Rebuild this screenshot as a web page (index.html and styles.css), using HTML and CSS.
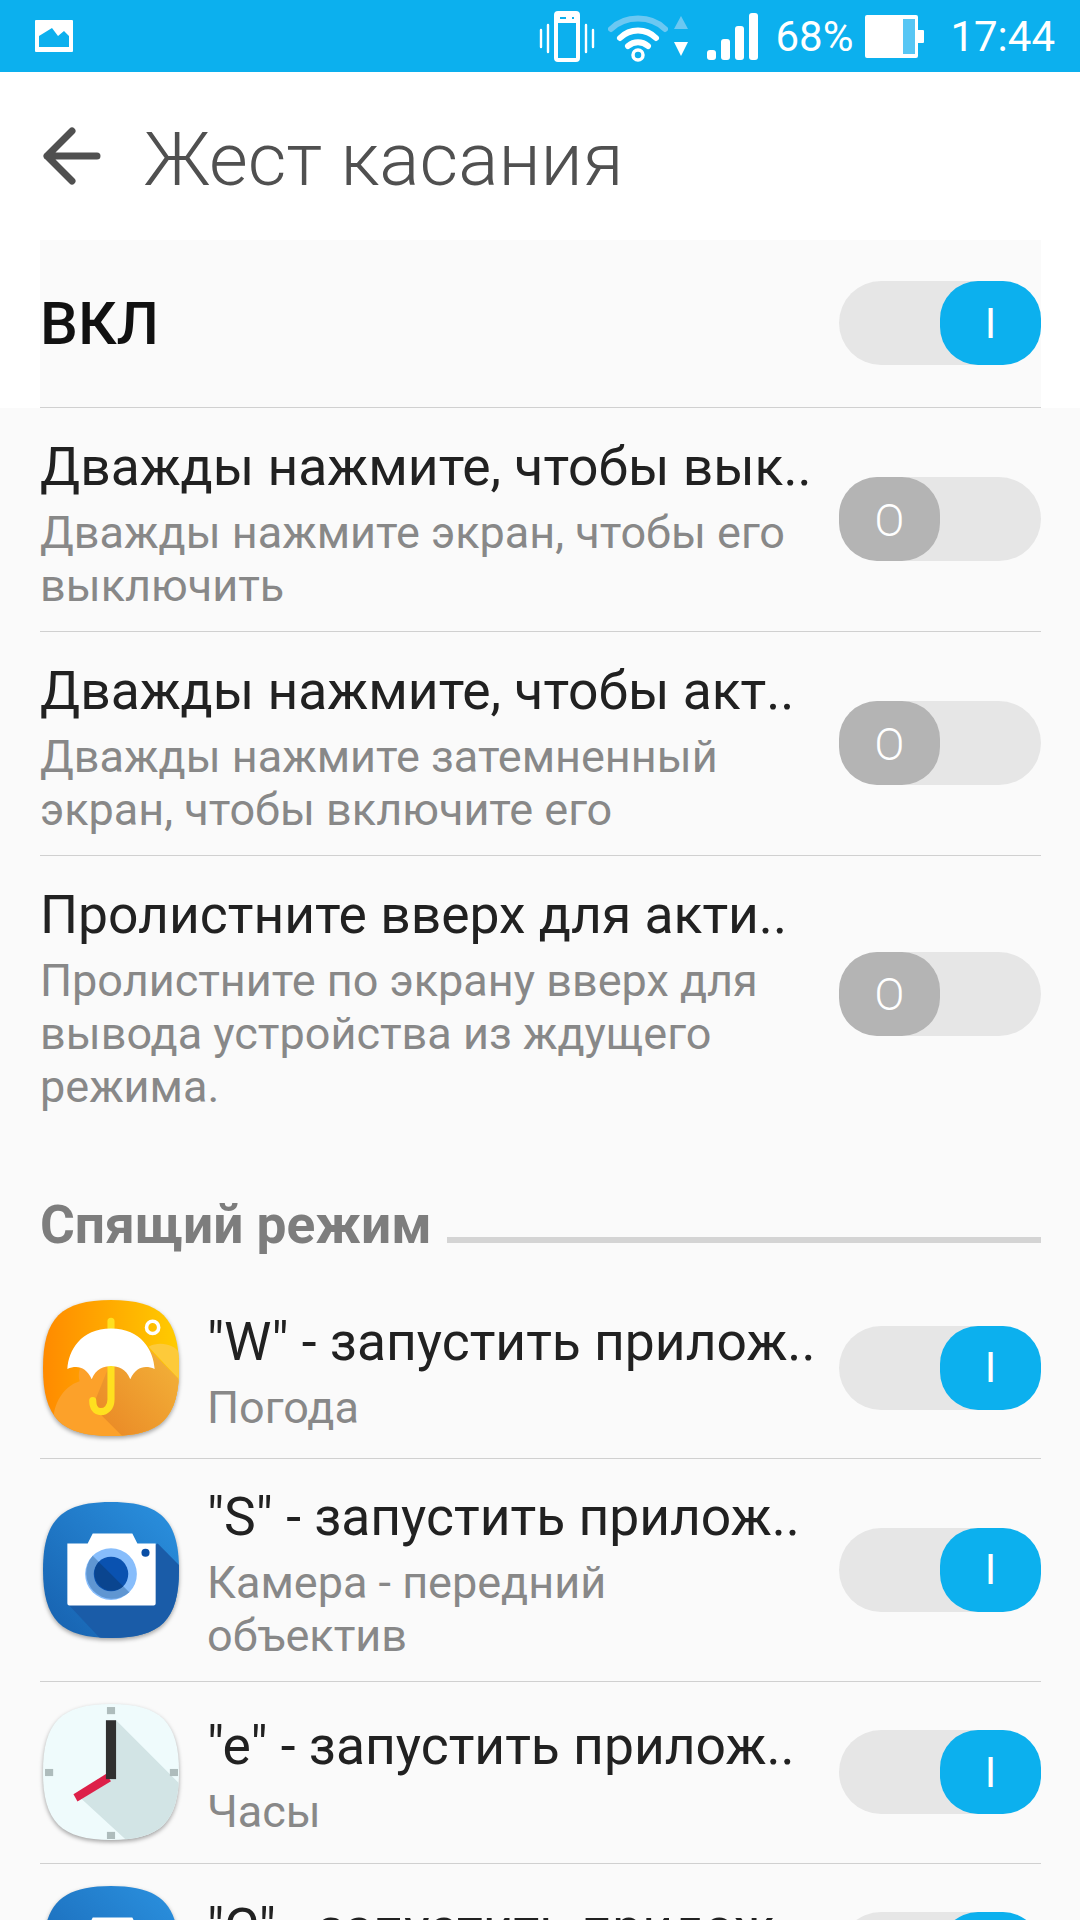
FILE: index.html
```html
<!DOCTYPE html>
<html lang="ru">
<head>
	<meta charset="UTF-8">
	<title>Жест касания</title>
	<link rel="stylesheet" href="styles.css">
</head>
<body>
	<div class="status_bar">
		<svg class="pic_icon" width="38" height="32" viewBox="0 0 38 32">
			<path fill="#fff" fill-rule="evenodd" d="M1 0H37a1 1 0 0 1 1 1V31a1 1 0 0 1-1 1H1a1 1 0 0 1-1-1V1a1 1 0 0 1 1-1ZM4 27H34V16L29 11 23 16 17 8 4 16Z"/>
		</svg>
		<div class="status_right">
			<svg width="56" height="51" viewBox="0 0 56 51">
				<g fill="none" stroke="#fff" stroke-linecap="round" stroke-width="2.4">
					<path d="M2 19V36M9 14V41M47 14V41M54 19V36"/>
					<rect x="17" y="2" width="22" height="47" rx="2" stroke-width="4"/>
				</g>
				<path fill="#fff" d="M17 2H39V12H17Z"/>
				<path stroke="#0cb0ee" stroke-width="2" d="M21 7H27M33 7H35"/>
			</svg>
			<svg class="wifi" width="60" height="52" viewBox="0 0 60 52">
				<g fill="none" stroke-linecap="round" stroke-width="6">
					<path stroke="#6cc8f2" d="M3 19C17 5 43 5 57 19"/>
					<path stroke="#fff" d="M12 28C22 18 38 18 48 28M20 36C26 31 34 31 40 36"/>
				</g>
				<circle cx="30" cy="45" r="5" fill="none" stroke="#fff" stroke-width="3.5"/>
			</svg>
			<svg class="arrows" width="16" height="42" viewBox="0 0 16 42">
				<path fill="#6cc8f2" d="M8 1 15 14H1Z"/>
				<path fill="#fff" d="M8 41 15 27H1Z"/>
			</svg>
			<svg class="signal" width="51" height="47" viewBox="0 0 51 47">
				<g fill="#fff">
					<rect x="0" y="37" width="9" height="10" rx="3"/>
					<rect x="14" y="26" width="9" height="21" rx="3"/>
					<rect x="28" y="13" width="9" height="34" rx="3"/>
					<rect x="42" y="0" width="9" height="47" rx="3"/>
				</g>
			</svg>
			<span class="pct">68%</span>
			<svg class="batt" width="59" height="43" viewBox="0 0 59 43">
				<path fill="#fff" d="M2 0H51a2 2 0 0 1 2 2V15H58a1 1 0 0 1 1 1V27a1 1 0 0 1-1 1H53V41a2 2 0 0 1-2 2H2a2 2 0 0 1-2-2V2a2 2 0 0 1 2-2Z"/>
				<path fill="#57c6f4" d="M38 4H50V39H38Z"/>
			</svg>
			<span class="clock">17:44</span>
		</div>
	</div>

	<div class="head">
		<svg width="58" height="58" viewBox="0 0 58 58">
			<path fill="none" stroke="#505050" stroke-width="7" stroke-linecap="round" stroke-linejoin="round" d="M29 4 4 29 29 54M4 29H54"/>
		</svg>
		<h1 class="title">Жест касания</h1>
	</div>

	<div class="on_wrap">
		<div class="on_row">
			<span class="on_name">ВКЛ</span>
			<div class="switch on"><span class="knob">I</span></div>
		</div>
	</div>

	<div class="main">
		<div class="row r1">
			<div class="txt">
				<div class="name">Дважды нажмите, чтобы вык..</div>
				<div class="des">Дважды нажмите экран, чтобы его выключить</div>
			</div>
			<div class="switch off"><span class="knob">O</span></div>
		</div>
		<div class="row r1">
			<div class="txt">
				<div class="name">Дважды нажмите, чтобы акт..</div>
				<div class="des">Дважды нажмите затемненный экран, чтобы включите его</div>
			</div>
			<div class="switch off"><span class="knob">O</span></div>
		</div>
		<div class="row r2">
			<div class="txt">
				<div class="name">Пролистните вверх для акти..</div>
				<div class="des">Пролистните по экрану вверх для вывода устройства из ждущего режима.</div>
			</div>
			<div class="switch off"><span class="knob">O</span></div>
		</div>

		<div class="section">
			<span class="section_name">Спящий режим</span>
			<span class="section_line"></span>
		</div>

		<div class="row a1">
			<svg class="app_icon" viewBox="0 0 134 134">
				<defs>
					<clipPath id="sq1"><path d="M67 0C116 0 134 18 134 67S116 134 67 134 0 116 0 67 18 0 67 0Z"/></clipPath>
					<linearGradient id="sun" x1="0" y1="0" x2="1" y2="0">
						<stop offset="0" stop-color="#ff8a00"/>
						<stop offset="1" stop-color="#ffcc00"/>
					</linearGradient>
					<linearGradient id="umb_shade" x1="0" y1="1" x2="1" y2="0">
						<stop offset="0" stop-color="#e98524"/>
						<stop offset="1" stop-color="#f4b83c"/>
					</linearGradient>
				</defs>
				<g clip-path="url(#sq1)">
					<rect width="134" height="134" fill="url(#sun)"/>
					<path fill="#fca12a" d="M12 134C5 105 20 85 36 80 34 72 36 62 45 58H110L134 80V134Z"/>
					<path fill="#fdca3a" d="M104 46C115 40 130 44 134 52V78Z"/>
					<path fill="url(#umb_shade)" d="M49 105 78 134H134V78L88 32 67 60Z"/>
					<circle cx="108" cy="27" r="6" fill="none" stroke="#fff" stroke-width="3.5"/>
					<path fill="none" stroke="#ffe01f" stroke-width="7" stroke-linecap="round" d="M67 21V28M67 65V98C67 106 62 110 57 110S49 106 49 99"/>
					<path fill="#fff" d="M67 28C37 28 25 50 24 68 34 64 42 66 48 78 52 68 60 65 67 65S82 68 86 78C92 66 100 64 110 68 109 50 97 28 67 28Z"/>
				</g>
			</svg>
			<div class="txt">
				<div class="name">"W" - запустить прилож..</div>
				<div class="des">Погода</div>
			</div>
			<div class="switch on"><span class="knob">I</span></div>
		</div>
		<div class="row a2">
			<svg class="app_icon" viewBox="0 0 134 134">
				<defs>
					<clipPath id="sq2"><path d="M67 0C116 0 134 18 134 67S116 134 67 134 0 116 0 67 18 0 67 0Z"/></clipPath>
					<linearGradient id="blue1" x1="0" y1="1" x2="1" y2="0">
						<stop offset="0" stop-color="#1660ae"/>
						<stop offset="1" stop-color="#2b92e0"/>
					</linearGradient>
				</defs>
				<g clip-path="url(#sq2)">
					<rect width="134" height="134" fill="url(#blue1)"/>
					<path fill="#1a5ca8" d="M24 100 113 41 134 62V134H56Z"/>
					<path fill="#fff" d="M24 41H44L49 31H88L93 41H111V100A2 2 0 0 1 109 102H26A2 2 0 0 1 24 100Z"/>
					<circle cx="67" cy="71" r="25.5" fill="#87bdfb"/>
					<path fill="#5f96d2" d="M49 53 85 89A25.5 25.5 0 0 1 49 53Z"/>
					<circle cx="67" cy="71" r="17" fill="#0a52b0"/>
					<path fill="#0a458f" d="M55 59 79 83A17 17 0 0 1 55 59Z"/>
					<circle cx="101" cy="50" r="4" fill="#0a4ea5"/>
				</g>
			</svg>
			<div class="txt">
				<div class="name">"S" - запустить прилож..</div>
				<div class="des">Камера - передний объектив</div>
			</div>
			<div class="switch on"><span class="knob">I</span></div>
		</div>
		<div class="row a3">
			<svg class="app_icon" viewBox="0 0 134 134">
				<defs>
					<clipPath id="sq3"><path d="M67 0C116 0 134 18 134 67S116 134 67 134 0 116 0 67 18 0 67 0Z"/></clipPath>
				</defs>
				<g clip-path="url(#sq3)">
					<rect width="134" height="134" fill="#effbfc"/>
					<path fill="#d2e4e5" d="M72 16 134 78V134H82L34 90 67 72Z"/>
					<g fill="#aebcbc">
						<rect x="63" y="3" width="8" height="7"/>
						<rect x="63" y="126" width="8" height="7"/>
						<rect x="2" y="64" width="8" height="7"/>
						<rect x="125" y="64" width="8" height="7"/>
					</g>
					<path fill="#dd2049" d="M62 69 67 76 34 96 30 89Z"/>
					<rect x="62" y="16" width="10" height="58" fill="#303030"/>
				</g>
			</svg>
			<div class="txt">
				<div class="name">"e" - запустить прилож..</div>
				<div class="des">Часы</div>
			</div>
			<div class="switch on"><span class="knob">I</span></div>
		</div>
		<div class="row a4">
			<svg class="app_icon" viewBox="0 0 134 134">
				<defs>
					<clipPath id="sq4"><path d="M67 0C116 0 134 18 134 67S116 134 67 134 0 116 0 67 18 0 67 0Z"/></clipPath>
				</defs>
				<g clip-path="url(#sq4)">
					<rect width="134" height="134" fill="url(#blue1)"/>
					<path fill="#fff" d="M24 41H44L49 31H88L93 41H111V100H24Z"/>
				</g>
			</svg>
			<div class="txt">
				<div class="name">"C" - запустить прилож..</div>
				<div class="des"></div>
			</div>
			<div class="switch on"><span class="knob">I</span></div>
		</div>
	</div>
</body>
</html>
```
FILE: styles.css
```css
html,body{
	margin: 0;
	height: 1920px;
	overflow: hidden;
}
body{
	background: #fafafa;
	font-family: Roboto, "Noto Sans", sans-serif;
	color: #212121;
}
.status_bar{
	height: 72px;
	background: #0cb0ee;
	display: flex;
	align-items: center;
	justify-content: space-between;
	padding: 0 25px 0 35px;
	color: #fff;
}
.status_right{
	display: flex;
	align-items: center;
}
.status_right svg{
	display: block;
}
.wifi{
	margin-left: 13px;
}
.arrows{
	margin-left: 5px;
}
.signal{
	margin-left: 18px;
}
.pct{
	font-size: 42px;
	margin-left: 17px;
}
.batt{
	margin-left: 12px;
}
.clock{
	font-size: 42px;
	margin-left: 26px;
}
.head{
	height: 168px;
	background: #fff;
	display: flex;
	align-items: center;
	padding-left: 43px;
	box-sizing: border-box;
}
.title{
	margin: 6px 0 0 43px;
	font-weight: 300;
	font-size: 75px;
	color: #505050;
}
.on_wrap{
	background: #fff;
	padding: 0 39px 0 40px;
}
.on_row{
	height: 166px;
	padding-bottom: 1px;
	background: #fafafa;
	display: flex;
	align-items: center;
	justify-content: space-between;
	border-bottom: 1px solid #d0d0d0;
}
.on_name{
	font-size: 60px;
	font-weight: 500;
	color: #111;
}
.switch{
	flex: none;
	display: flex;
	width: 202px;
	height: 84px;
	border-radius: 42px;
	background: #e6e6e6;
}
.switch.on{
	justify-content: flex-end;
}
.knob{
	width: 101px;
	height: 84px;
	border-radius: 38px;
	display: flex;
	align-items: center;
	justify-content: center;
	color: #fff;
	font-size: 42px;
}
.on .knob{
	background: #0cb0ee;
}
.off .knob{
	background: #b4b4b4;
	font-size: 44px;
	font-weight: 300;
	padding-top: 3px;
	height: 81px;
}
.main{
	padding: 0 39px 0 40px;
}
.row{
	display: flex;
	align-items: center;
	padding-bottom: 1px;
	border-bottom: 1px solid #d0d0d0;
	box-sizing: border-box;
}
.r1{
	height: 224px;
}
.r2{
	height: 276px;
	border-bottom: none;
}
.txt{
	flex: 1;
	min-width: 0;
}
.name{
	font-size: 53.4px;
	line-height: 79px;
	white-space: nowrap;
}
.des{
	font-size: 45px;
	line-height: 53px;
	color: #888;
	padding-right: 30px;
}
.des:empty{
	height: 53px;
}
.section{
	height: 146px;
	display: flex;
	align-items: flex-end;
	box-sizing: border-box;
	padding-bottom: 26px;
}
.section_name{
	font-size: 53.3px;
	font-weight: 700;
	line-height: 1;
	color: #7d7d7d;
}
.section_line{
	flex: 1;
	height: 6px;
	margin: 0 0 9px 15px;
	background: #d4d4d4;
}
.a1{
	height: 181px;
}
.a2{
	height: 223px;
}
.a3{
	height: 182px;
}
.a4{
	height: 181px;
	border-bottom: none;
}
.app_icon{
	flex: none;
	width: 136px;
	height: 136px;
	margin: 0 28px 0 3px;
	filter: drop-shadow(0 2px 2px rgba(0,0,0,0.35));
}
```
